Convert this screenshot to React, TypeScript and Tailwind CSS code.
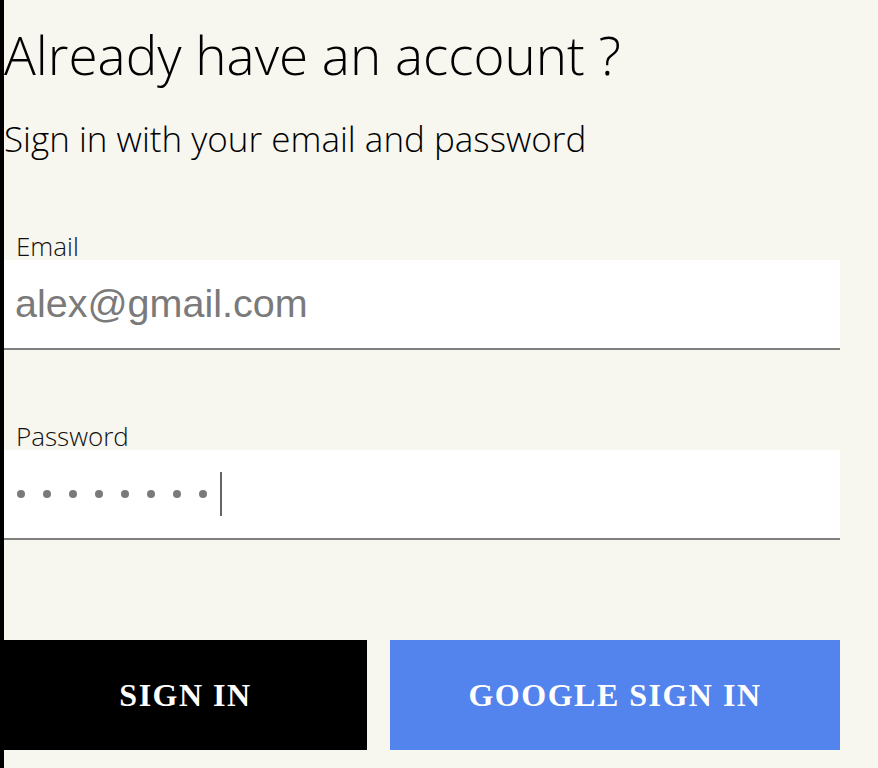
export default function App() {
  return (
    <div className="min-h-screen bg-[#f7f6ef] border-l-4 border-black font-['Open_Sans',sans-serif] text-black">
      <div className="w-[836px]">
        <h2 className="pt-[20px] text-[53px] leading-[70px] font-light">
          Already have an account ?
        </h2>
        <p className="mt-[26px] text-[35px] leading-[45px] font-light">
          Sign in with your email and password
        </p>

        {/* Email */}
        <div className="mt-[72px]">
          <label className="block pl-[12px] text-[26px] leading-[27px] font-light text-[#111]">Email</label>
          <div className="h-[90px] bg-white border-b-2 border-[#7f7f7f] flex items-center pl-[11px]">
            <span className="font-['Liberation_Sans',Arial,sans-serif] text-[39.5px] text-[#7a7a7a]">alex@gmail.com</span>
          </div>
        </div>

        {/* Password */}
        <div className="mt-[73px]">
          <label className="block pl-[12px] text-[26px] leading-[27px] font-light text-[#111]">Password</label>
          <div className="h-[90px] bg-white border-b-2 border-[#7f7f7f] flex items-center pl-[13px]">
            <div className="flex items-center gap-[18px]">
              {[0, 1, 2, 3, 4, 5, 6, 7].map((i) => (
                <span key={i} className="w-[8px] h-[8px] rounded-full bg-[#7a7a7a]" />
              ))}
            </div>
            <span className="ml-[13px] w-[2px] h-[44px] bg-[#666]" />
          </div>
        </div>

        {/* Buttons */}
        <div className="mt-[100px] flex gap-[23px]">
          <button className="w-[363px] h-[110px] bg-black text-white font-['Liberation_Serif',serif] font-bold text-[32px] tracking-[1.5px]">
            SIGN IN
          </button>
          <button className="w-[450px] h-[110px] bg-[#5383ec] text-white font-['Liberation_Serif',serif] font-bold text-[32px] tracking-[1.5px]">
            GOOGLE SIGN IN
          </button>
        </div>
      </div>
    </div>
  );
}
